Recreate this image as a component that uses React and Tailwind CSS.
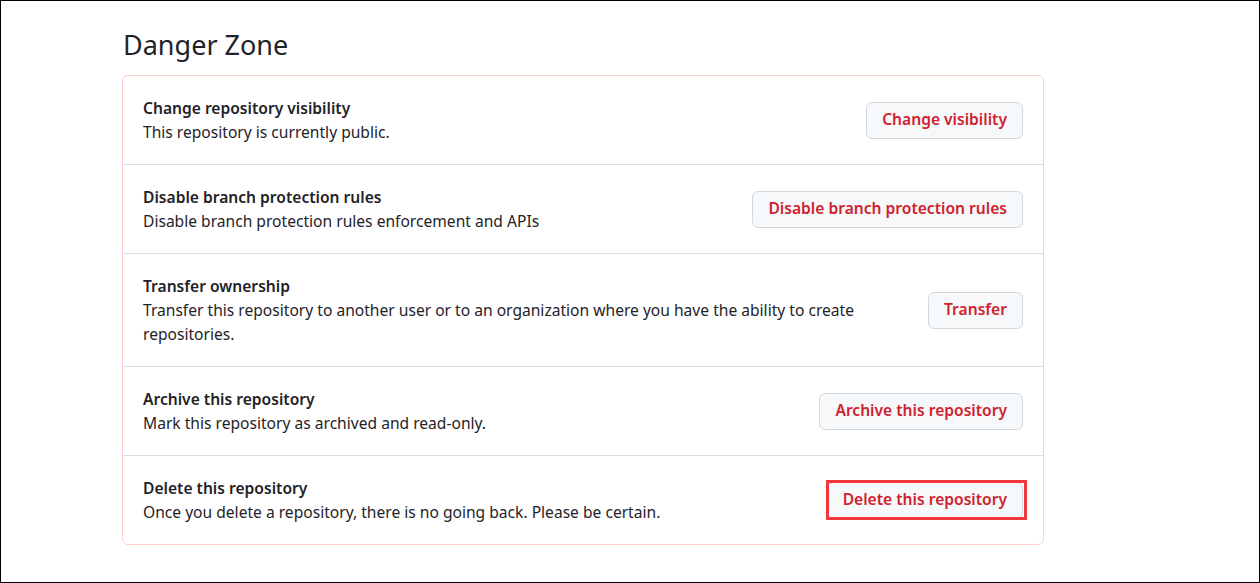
const rows = [
  {
    title: 'Change repository visibility',
    desc: 'This repository is currently public.',
    action: 'Change visibility',
  },
  {
    title: 'Disable branch protection rules',
    desc: 'Disable branch protection rules enforcement and APIs',
    action: 'Disable branch protection rules',
  },
  {
    title: 'Transfer ownership',
    desc: 'Transfer this repository to another user or to an organization where you have the ability to create repositories.',
    action: 'Transfer',
  },
  {
    title: 'Archive this repository',
    desc: 'Mark this repository as archived and read-only.',
    action: 'Archive this repository',
  },
  {
    title: 'Delete this repository',
    desc: 'Once you delete a repository, there is no going back. Please be certain.',
    action: 'Delete this repository',
    highlight: true,
  },
];

function DangerButton({ label, highlight }) {
  return (
    <div className="relative flex">
      <button className="h-[37px] px-[15px] rounded-md border border-[#d1d9e0] bg-[#f6f8fa] text-[15.6px] font-semibold text-[#cf222e] whitespace-nowrap">
        {label}
      </button>
      {/* annotation box drawn over the button */}
      {highlight && (
        <div className="absolute -top-[2px] -bottom-[1px] -left-[1px] -right-[4px] border-[3px] border-[#f2383f] pointer-events-none" />
      )}
    </div>
  );
}

export default function App() {
  return (
    <div
      className="w-[1260px] h-[583px] border border-black bg-white text-[#1f2328]"
      style={{ fontFamily: '"Segoe UI", "Noto Sans", sans-serif' }}
    >
      <div className="ml-[121px] w-[922px] pt-[27px]">
        <h2 className="text-[27px] leading-[34px] font-normal pl-px mb-[13px]">Danger Zone</h2>
        <div className="rounded-md border border-[#ffcecb]">
          {rows.map((r, i) => (
            <div
              key={r.title}
              className={`flex items-center justify-between gap-[60px] px-[20px] py-[20px] ${
                i > 0 ? 'border-t border-[#d8dee4]' : ''
              }`}
            >
              <div className="text-[15.6px] leading-[24px]">
                <div className="font-semibold">{r.title}</div>
                <div>{r.desc}</div>
              </div>
              <DangerButton label={r.action} highlight={r.highlight} />
            </div>
          ))}
        </div>
      </div>
    </div>
  );
}
